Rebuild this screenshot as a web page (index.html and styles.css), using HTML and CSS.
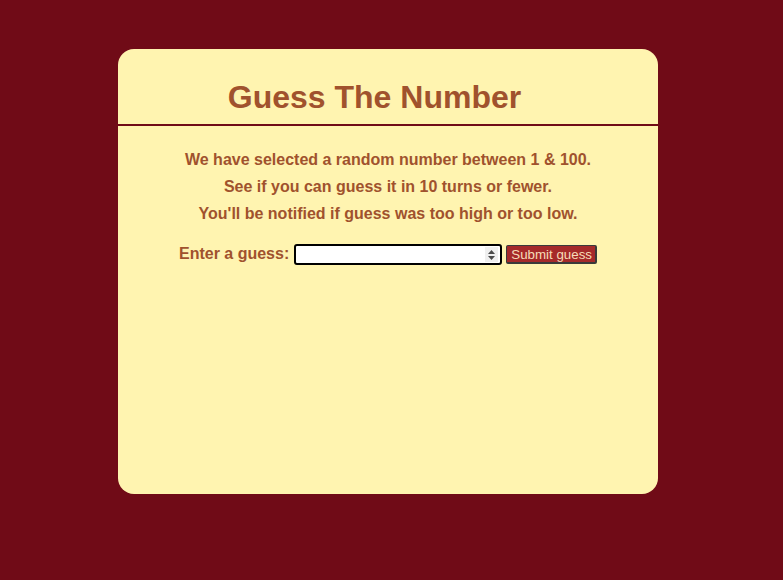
FILE: index.html
```html
<!DOCTYPE html>
<html>
<head>
<meta charset="utf-8">
<link rel="stylesheet" href="styles.css">
</head>
<body>
<div class="page">
  <main class="card">
    <header class="card-head">
      <h1 class="title">Guess The Number</h1>
    </header>
    <section class="card-body">
      <p class="intro">We have selected a random number between 1 &amp; 100.</p>
      <p class="intro">See if you can guess it in 10 turns or fewer.</p>
      <p class="intro">You'll be notified if guess was too high or too low.</p>
      <form class="guess-row" onsubmit="return false;">
        <label class="guess-label" for="guessField">Enter a guess: </label>
        <span class="field-wrap">
          <input class="guess-field" type="text" id="guessField">
          <span class="spin">
            <svg width="9" height="12" viewBox="0 0 9 12"><path d="M4.5 1 L8 5 L1 5 Z M4.5 11 L8 7 L1 7 Z" fill="#4a4a4a"/></svg>
          </span>
        </span>
        <button class="submit" type="submit">Submit guess</button>
      </form>
    </section>
  </main>
</div>
</body>
</html>
```
FILE: styles.css
```css
html, body {
  margin: 0;
  padding: 0;
  background: #700b17;
}
body {
  font-family: "Liberation Sans", Arial, sans-serif;
}
.page {
  padding: 49px 0 0 118px;
}
.card {
  width: 540px;
  height: 445px;
  background: #fff4b0;
  border-radius: 16px;
  color: #a0522d;
  box-sizing: border-box;
}
.card-head {
  padding: 30px 27px 8px 0;
  border-bottom: 2px solid #700b17;
}
.title {
  margin: 0;
  font-size: 32px;
  font-weight: bold;
  text-align: center;
  line-height: 37px;
}
.card-body {
  padding-top: 20px;
  display: flex;
  flex-direction: column;
  align-items: center;
}
.intro {
  margin: 0;
  font-size: 16px;
  font-weight: bold;
  line-height: 27px;
  text-align: center;
}
.guess-row {
  margin-top: 17px;
  display: flex;
  align-items: center;
  gap: 5px;
}
.guess-label {
  font-size: 16px;
  font-weight: bold;
  margin-top: -2px;
}
.field-wrap {
  position: relative;
  display: inline-block;
  width: 208px;
  height: 21px;
}
.guess-field {
  width: 208px;
  height: 21px;
  box-sizing: border-box;
  border: 2px solid #000;
  border-radius: 3px;
  background: #fff;
  padding: 0 4px;
  margin: 0;
  font: 13px "Liberation Sans", Arial, sans-serif;
}
.spin {
  position: absolute;
  right: 4px;
  top: 3px;
  width: 13px;
  height: 15px;
  background: #efefef;
  display: flex;
  align-items: center;
  justify-content: center;
}
.submit {
  margin-left: -1px;
  height: 19px;
  padding: 0 3px 0 4px;
  background: #a52a2a;
  color: #f6dcb8;
  border: 1px solid #3a3a3a;
  border-width: 1px 2px 2px 1px;
  border-radius: 2px;
  font: 13.33px "Liberation Sans", Arial, sans-serif;
  line-height: 15px;
}
```
